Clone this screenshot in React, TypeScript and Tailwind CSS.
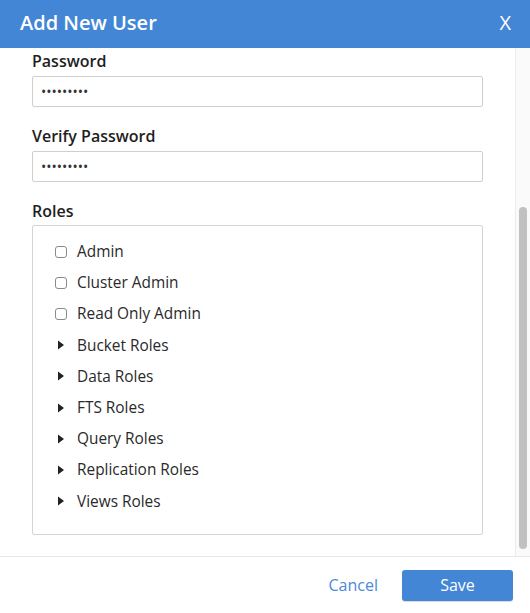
import { useState } from "react";

const checkRoles = ["Admin", "Cluster Admin", "Read Only Admin"];
const groupRoles = ["Bucket Roles", "Data Roles", "FTS Roles", "Query Roles", "Replication Roles", "Views Roles"];

function Field({ label, value }: { label: string; value: string }) {
  return (
    <div className="mb-[18px]">
      <div className="h-[22px] leading-[22px] mb-[4px] text-[16px] font-semibold text-[#1e1e1e]">{label}</div>
      <input
        type="password"
        defaultValue={value}
        className="w-full h-[31px] border border-[#cfcfcf] rounded-[2px] px-[8px] text-[14px] text-[#333] outline-none"
      />
    </div>
  );
}

export default function App() {
  const [checked, setChecked] = useState<Record<string, boolean>>({});

  return (
    <div className="w-[530px] h-[613px] flex flex-col bg-white font-['Open_Sans',sans-serif] overflow-hidden">
      <div className="h-[48px] shrink-0 bg-[#4286d5] flex items-center justify-between pl-[20px] pr-[19px] text-white">
        <h2 className="text-[20px] font-semibold leading-none -mt-[2px]">Add New User</h2>
        <span className="text-[20px] leading-none -mt-[2px]">X</span>
      </div>

      <div className="h-[508px] flex">
        <div className="flex-1 pl-[32px] pr-[32px] pt-[2px]">
          <Field label="Password" value="password1" />
          <Field label="Verify Password" value="password1" />
          <div className="h-[22px] leading-[22px] mb-[3px] text-[16px] font-semibold text-[#1e1e1e]">Roles</div>
          <div className="h-[310px] border border-[#d4d4d4] rounded-[2px] pt-[10px] pl-[22px]">
            {checkRoles.map((r) => (
              <label key={r} className="h-[31.2px] flex items-center gap-[10px] text-[15.4px] text-[#2a2a2a] cursor-pointer">
                <span
                  onClick={() => setChecked({ ...checked, [r]: !checked[r] })}
                  className={`w-[12px] h-[12px] border rounded-[3px] ${checked[r] ? "bg-[#4286d5] border-[#4286d5]" : "border-[#8a8a8a] bg-white"}`}
                />
                {r}
              </label>
            ))}
            {groupRoles.map((r) => (
              <div key={r} className="h-[31.2px] flex items-center gap-[10px] text-[15.4px] text-[#2a2a2a]">
                <svg width="12" height="12" viewBox="0 0 12 12" className="shrink-0">
                  <path d="M3 1.5 L9 6 L3 10.5 Z" fill="#222" />
                </svg>
                {r}
              </div>
            ))}
          </div>
        </div>
        <div className="w-[15px] shrink-0 bg-[#fafafa] border-l border-[#ececec] flex flex-col pt-[159px] pb-[7px] items-center">
          <div className="w-[8px] flex-1 rounded-full bg-[#c1c1c1]" />
        </div>
      </div>

      <div className="flex-1 border-t border-[#e6e6e6] flex items-center justify-end pr-[17px] gap-[24px]">
        <button className="text-[16px] text-[#4a8ad8] -mt-[1px]">Cancel</button>
        <button className="w-[111px] h-[31px] rounded-[3px] bg-[#4286d5] text-white text-[16px] shadow-[0_1px_1px_rgba(0,0,0,0.15)]">
          Save
        </button>
      </div>
    </div>
  );
}
